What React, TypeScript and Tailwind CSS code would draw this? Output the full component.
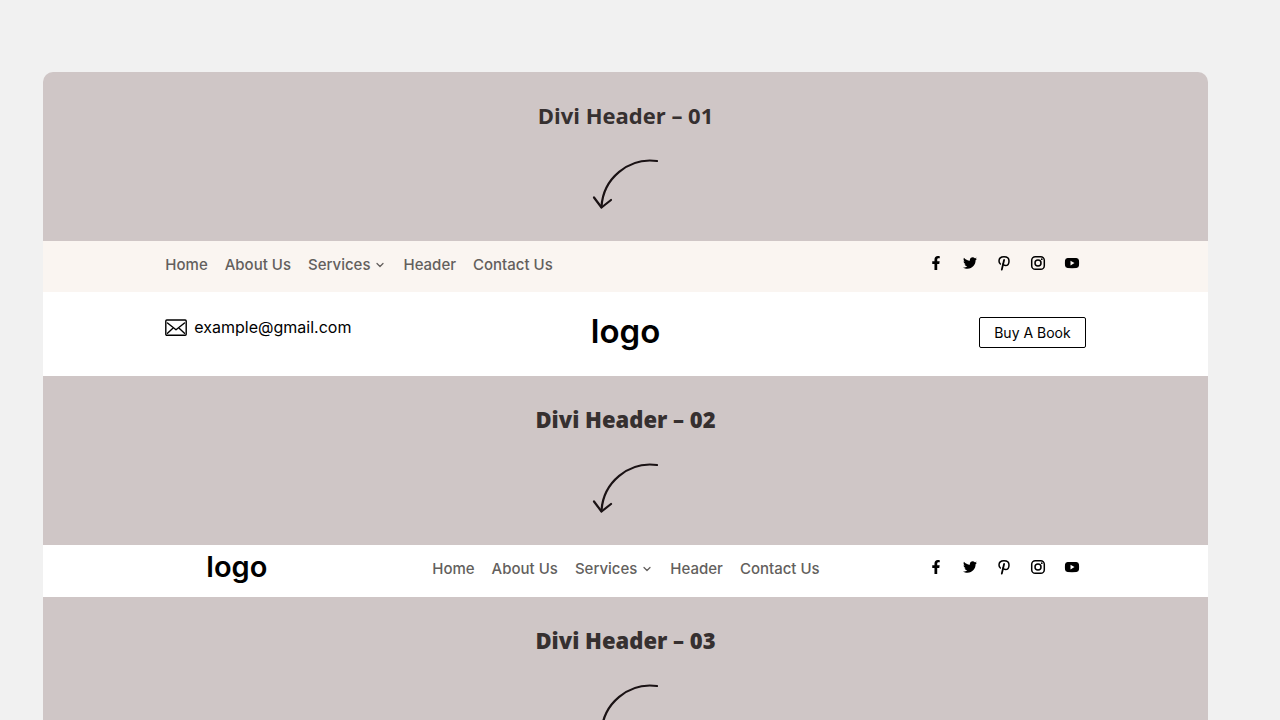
import React from 'react';
import clsx from 'clsx';
import { ChevronDown } from 'lucide-react';
import { FaFacebookF, FaTwitter } from 'react-icons/fa';

interface NavItem {
  label: string;
  hasMenu?: boolean;
}

const NAV_ITEMS: NavItem[] = [
  { label: 'Home' },
  { label: 'About Us' },
  { label: 'Services', hasMenu: true },
  { label: 'Header' },
  { label: 'Contact Us' },
];

function PinterestIcon() {
  return (
    <svg viewBox="0 0 16 16" className="w-4 h-4" fill="none" stroke="currentColor" strokeLinecap="round">
      <path d="M4.4 9 C3.4 8.2 3 7.2 3 6 C3 3.4 5.1 1.7 8 1.7 C11 1.7 13 3.4 13 5.9 C13 8.6 11.5 10.6 9.5 10.6 C8.3 10.6 7.4 10 7.1 9" strokeWidth="1.5" />
      <path d="M8.1 5 L5.8 14.6" strokeWidth="1.8" />
    </svg>
  );
}

function InstagramIcon() {
  return (
    <svg viewBox="0 0 16 16" className="w-4 h-4" fill="none" stroke="currentColor">
      <rect x="1.7" y="1.7" width="12.6" height="12.6" rx="3.6" strokeWidth="1.5" />
      <circle cx="8" cy="8" r="3" strokeWidth="1.5" />
      <circle cx="11.8" cy="4.2" r="0.9" fill="currentColor" stroke="none" />
    </svg>
  );
}

function YoutubeIcon() {
  return (
    <svg viewBox="0 0 16 16" className="w-4 h-4">
      <path
        fill="currentColor"
        fillRule="evenodd"
        d="M3.6 3.1 Q8 2.7 12.4 3.1 Q14.8 3.3 15 5.6 Q15.2 8 15 10.6 Q14.8 12.8 12.4 13 Q8 13.3 3.6 13 Q1.2 12.8 1 10.6 Q0.8 8 1 5.6 Q1.2 3.3 3.6 3.1 Z M6.5 5.8 V10.4 L10.5 8.1 Z"
      />
    </svg>
  );
}

const SOCIALS = [
  { name: 'Facebook', icon: <FaFacebookF className="w-[14px] h-[14px]" /> },
  { name: 'Twitter', icon: <FaTwitter className="w-[14px] h-[14px]" /> },
  { name: 'Pinterest', icon: <PinterestIcon /> },
  { name: 'Instagram', icon: <InstagramIcon /> },
  { name: 'YouTube', icon: <YoutubeIcon /> },
];

function SectionTitle({ title, heavy }: { title: string; heavy?: boolean }) {
  return (
    <section className="flex flex-col items-center pt-[27px] pb-[31px] bg-[#cfc6c6]">
      <h2
        className={clsx(
          "font-['Open_Sans',sans-serif] text-[22px] leading-8 text-[#363030]",
          heavy ? 'font-extrabold' : 'font-bold'
        )}
      >
        {title}
      </h2>
      <svg
        viewBox="0 0 68 52"
        className="w-[68px] h-[52px] mt-[27px] text-[#1a1214]"
        fill="none"
        stroke="currentColor"
        strokeWidth="2.2"
        strokeLinecap="round"
        strokeLinejoin="round"
      >
        <path d="M65 3 A49 49 0 0 0 9.5 49" />
        <path d="M2 39.5 L9.5 49.5 L19 42" />
      </svg>
    </section>
  );
}

function MainNav() {
  return (
    <nav className="h-12 flex items-center gap-[17px] text-[15px] font-medium text-[#635f5d]">
      {NAV_ITEMS.map((item) => (
        <a key={item.label} href="#" className="flex items-center whitespace-nowrap">
          {item.label}
          {item.hasMenu && <ChevronDown className="w-3 h-3 ml-1" strokeWidth={2.5} />}
        </a>
      ))}
    </nav>
  );
}

function SocialLinks() {
  return (
    <div className="h-11 flex items-center gap-[18px] pr-[6px] ml-auto text-black">
      {SOCIALS.map((social) => (
        <a key={social.name} href="#" aria-label={social.name} className="w-4 flex justify-center">
          {social.icon}
        </a>
      ))}
    </div>
  );
}

function HeaderOne() {
  return (
    <header className="bg-white">
      <div className="h-[51px] bg-[#faf5f1]">
        <div className="w-[79%] mx-auto flex items-start">
          <MainNav />
          <SocialLinks />
        </div>
      </div>
      <div className="w-[79%] mx-auto h-[84px] pt-[25px] grid grid-cols-3 items-start">
        <a href="mailto:example@gmail.com" className="flex items-center gap-[7px] text-base leading-5 text-black">
          <svg viewBox="0 0 22 17" className="w-[22px] h-[17px]" fill="none" stroke="currentColor" strokeWidth="1.4" strokeLinejoin="round">
            <rect x="0.8" y="1" width="20.4" height="15.2" rx="1" />
            <path d="M2.5 4 L11 10.8 L19.5 4 M2.5 14.2 L7.6 9.6 M19.5 14.2 L14.4 9.6" strokeLinecap="round" />
          </svg>
          example@gmail.com
        </a>
        <a href="#" className="justify-self-center text-[33px] leading-7 font-semibold text-black">
          logo
        </a>
        <button className="justify-self-end h-[31px] px-[14px] border border-black rounded-xs text-sm text-black whitespace-nowrap">
          Buy A Book
        </button>
      </div>
    </header>
  );
}

function HeaderTwo() {
  return (
    <header className="h-[52px] bg-white">
      <div className="w-[79%] mx-auto flex items-start">
        <div className="w-[29%] pl-[41px] pt-2">
          <a href="#" className="block text-[29px] leading-7 font-semibold text-black">
            logo
          </a>
        </div>
        <MainNav />
        <SocialLinks />
      </div>
    </header>
  );
}

export default function App() {
  return (
    <div className="min-h-screen pt-18 pl-[43px] pr-18 bg-[#f1f1f1] font-[Inter,sans-serif]">
      <main className="rounded-t-[10px] overflow-hidden">
        <SectionTitle title="Divi Header – 01" />
        <HeaderOne />
        <SectionTitle title="Divi Header – 02" heavy />
        <HeaderTwo />
        <SectionTitle title="Divi Header – 03" heavy />
      </main>
    </div>
  );
}
